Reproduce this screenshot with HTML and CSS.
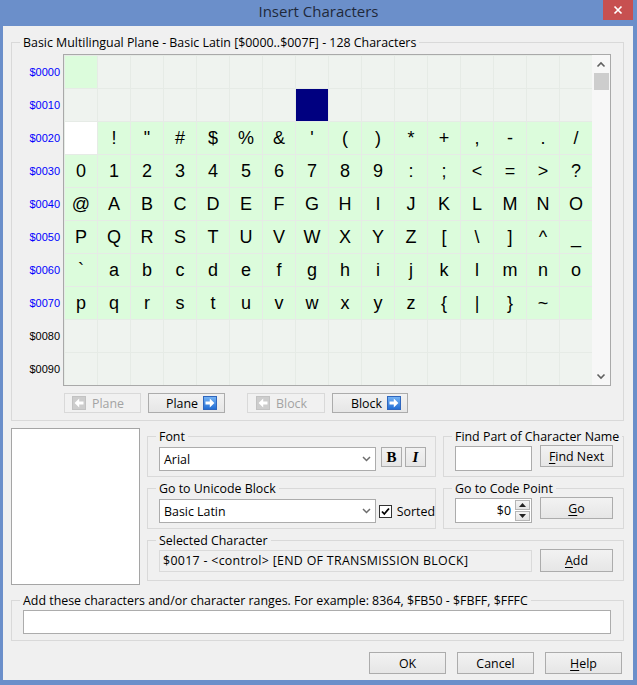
FILE: index.html
```html
<!DOCTYPE html>
<html>
<head>
<meta charset="utf-8">
<title>Insert Characters</title>
<link rel="stylesheet" href="styles.css">
</head>
<body>
<div class="window">
  <div class="titlebar">
    <div class="title">Insert Characters</div>
    <div class="close"><svg width="10" height="10" viewBox="0 0 10 10"><path d="M1.5 1.5L8.5 8.5M8.5 1.5L1.5 8.5" stroke="#fff" stroke-width="1.7"/></svg></div>
  </div>
  <div class="client">
    <fieldset class="group plane">
      <legend>Basic Multilingual Plane - Basic Latin [$0000..$007F] - 128 Characters</legend>
      <div class="plane-body">
        <div class="chart">
          <div class="rowlabels">
            <div class="rl">$0000</div>
            <div class="rl">$0010</div>
            <div class="rl">$0020</div>
            <div class="rl">$0030</div>
            <div class="rl">$0040</div>
            <div class="rl">$0050</div>
            <div class="rl">$0060</div>
            <div class="rl">$0070</div>
            <div class="rl k">$0080</div>
            <div class="rl k">$0090</div>
          </div>
          <div class="gridbox">
            <div class="cells">
              <span class="c g"></span><span class="c"></span><span class="c"></span><span class="c"></span><span class="c"></span><span class="c"></span><span class="c"></span><span class="c"></span><span class="c"></span><span class="c"></span><span class="c"></span><span class="c"></span><span class="c"></span><span class="c"></span><span class="c"></span><span class="c"></span>
              <span class="c"></span><span class="c"></span><span class="c"></span><span class="c"></span><span class="c"></span><span class="c"></span><span class="c"></span><span class="c sel"></span><span class="c"></span><span class="c"></span><span class="c"></span><span class="c"></span><span class="c"></span><span class="c"></span><span class="c"></span><span class="c"></span>
              <span class="c w"></span><span class="c g">!</span><span class="c g">&quot;</span><span class="c g">#</span><span class="c g">$</span><span class="c g">%</span><span class="c g">&amp;</span><span class="c g">'</span><span class="c g">(</span><span class="c g">)</span><span class="c g">*</span><span class="c g">+</span><span class="c g">,</span><span class="c g">-</span><span class="c g">.</span><span class="c g">/</span>
              <span class="c g">0</span><span class="c g">1</span><span class="c g">2</span><span class="c g">3</span><span class="c g">4</span><span class="c g">5</span><span class="c g">6</span><span class="c g">7</span><span class="c g">8</span><span class="c g">9</span><span class="c g">:</span><span class="c g">;</span><span class="c g">&lt;</span><span class="c g">=</span><span class="c g">&gt;</span><span class="c g">?</span>
              <span class="c g">@</span><span class="c g">A</span><span class="c g">B</span><span class="c g">C</span><span class="c g">D</span><span class="c g">E</span><span class="c g">F</span><span class="c g">G</span><span class="c g">H</span><span class="c g">I</span><span class="c g">J</span><span class="c g">K</span><span class="c g">L</span><span class="c g">M</span><span class="c g">N</span><span class="c g">O</span>
              <span class="c g">P</span><span class="c g">Q</span><span class="c g">R</span><span class="c g">S</span><span class="c g">T</span><span class="c g">U</span><span class="c g">V</span><span class="c g">W</span><span class="c g">X</span><span class="c g">Y</span><span class="c g">Z</span><span class="c g">[</span><span class="c g">\</span><span class="c g">]</span><span class="c g">^</span><span class="c g">_</span>
              <span class="c g">`</span><span class="c g">a</span><span class="c g">b</span><span class="c g">c</span><span class="c g">d</span><span class="c g">e</span><span class="c g">f</span><span class="c g">g</span><span class="c g">h</span><span class="c g">i</span><span class="c g">j</span><span class="c g">k</span><span class="c g">l</span><span class="c g">m</span><span class="c g">n</span><span class="c g">o</span>
              <span class="c g">p</span><span class="c g">q</span><span class="c g">r</span><span class="c g">s</span><span class="c g">t</span><span class="c g">u</span><span class="c g">v</span><span class="c g">w</span><span class="c g">x</span><span class="c g">y</span><span class="c g">z</span><span class="c g">{</span><span class="c g">|</span><span class="c g">}</span><span class="c g">~</span><span class="c g"></span>
              <span class="c"></span><span class="c"></span><span class="c"></span><span class="c"></span><span class="c"></span><span class="c"></span><span class="c"></span><span class="c"></span><span class="c"></span><span class="c"></span><span class="c"></span><span class="c"></span><span class="c"></span><span class="c"></span><span class="c"></span><span class="c"></span>
              <span class="c"></span><span class="c"></span><span class="c"></span><span class="c"></span><span class="c"></span><span class="c"></span><span class="c"></span><span class="c"></span><span class="c"></span><span class="c"></span><span class="c"></span><span class="c"></span><span class="c"></span><span class="c"></span><span class="c"></span><span class="c"></span>
            </div>
            <div class="scroll">
              <div class="sb-btn"><svg width="10" height="7" viewBox="0 0 10 7"><path d="M1.5 5.5L5 2L8.5 5.5" fill="none" stroke="#606060" stroke-width="1.6"/></svg></div>
              <div class="sb-thumb"></div>
              <div class="sb-track"></div>
              <div class="sb-btn"><svg width="10" height="7" viewBox="0 0 10 7"><path d="M1.5 1.5L5 5L8.5 1.5" fill="none" stroke="#606060" stroke-width="1.6"/></svg></div>
            </div>
          </div>
        </div>
        <div class="nav">
          <button class="btn navbtn off start"><svg class="ico" width="14" height="14" viewBox="0 0 14 14"><rect x="0.5" y="0.5" width="13" height="13" fill="#cdcdcd" stroke="#c2c2c2"/><path d="M11.5 5.6H7.2V2.6L2.6 7L7.2 11.4V8.4H11.5z" fill="#fff"/></svg><span>Plane</span></button>
          <button class="btn navbtn end gap7"><span>Plane</span><svg class="ico" width="14" height="14" viewBox="0 0 14 14"><defs><linearGradient id="gb1" x1="0" y1="0" x2="0" y2="1"><stop offset="0" stop-color="#79b6f6"/><stop offset="1" stop-color="#1f6bd3"/></linearGradient></defs><rect x="0.5" y="0.5" width="13" height="13" fill="url(#gb1)" stroke="#2f66bd"/><path d="M2.5 5.6H6.8V2.6L11.4 7L6.8 11.4V8.4H2.5z" fill="#fff"/></svg></button>
          <button class="btn navbtn off start gap22 wide"><svg class="ico" width="14" height="14" viewBox="0 0 14 14"><rect x="0.5" y="0.5" width="13" height="13" fill="#cdcdcd" stroke="#c2c2c2"/><path d="M11.5 5.6H7.2V2.6L2.6 7L7.2 11.4V8.4H11.5z" fill="#fff"/></svg><span>Block</span></button>
          <button class="btn navbtn end gap7 r6"><span>Block</span><svg class="ico" width="14" height="14" viewBox="0 0 14 14"><defs><linearGradient id="gb2" x1="0" y1="0" x2="0" y2="1"><stop offset="0" stop-color="#79b6f6"/><stop offset="1" stop-color="#1f6bd3"/></linearGradient></defs><rect x="0.5" y="0.5" width="13" height="13" fill="url(#gb2)" stroke="#2f66bd"/><path d="M2.5 5.6H6.8V2.6L11.4 7L6.8 11.4V8.4H2.5z" fill="#fff"/></svg></button>
        </div>
      </div>
    </fieldset>

    <div class="lower">
      <div class="preview"></div>

      <fieldset class="group">
        <legend>Font</legend>
        <div class="gbody">
          <div class="combo w217"><span>Arial</span><svg width="9" height="6" viewBox="0 0 9 6"><path d="M1 1L4.5 4.5L8 1" fill="none" stroke="#6d6d6d" stroke-width="1.5"/></svg></div>
          <button class="btn tbtn bold">B</button>
          <button class="btn tbtn ital">I</button>
        </div>
      </fieldset>

      <fieldset class="group">
        <legend>Find Part of Character Name</legend>
        <div class="gbody g3">
          <div class="edit e77"></div>
          <button class="btn sidebtn"><span><u>F</u>ind Next</span></button>
        </div>
      </fieldset>

      <fieldset class="group">
        <legend>Go to Unicode Block</legend>
        <div class="gbody">
          <div class="combo w217"><span>Basic Latin</span><svg width="9" height="6" viewBox="0 0 9 6"><path d="M1 1L4.5 4.5L8 1" fill="none" stroke="#6d6d6d" stroke-width="1.5"/></svg></div>
          <div class="check"><svg width="13" height="13" viewBox="0 0 13 13"><rect x="0.5" y="0.5" width="12" height="12" fill="#fff" stroke="#333"/><path d="M3 6.5L5.3 9L10 3.5" fill="none" stroke="#000" stroke-width="1.8"/></svg><span>Sorted</span></div>
        </div>
      </fieldset>

      <fieldset class="group">
        <legend>Go to Code Point</legend>
        <div class="gbody g3">
          <div class="edit e77 spinedit"><span class="spinval">$0</span>
            <div class="spin">
              <div class="spinb"><svg width="7" height="4" viewBox="0 0 7 4"><path d="M0 4L3.5 0L7 4z" fill="#222"/></svg></div>
              <div class="spinb"><svg width="7" height="4" viewBox="0 0 7 4"><path d="M0 0L3.5 4L7 0z" fill="#222"/></svg></div>
            </div>
          </div>
          <button class="btn sidebtn"><span><u>G</u>o</span></button>
        </div>
      </fieldset>

      <fieldset class="group selected">
        <legend>Selected Character</legend>
        <div class="gbody g3">
          <div class="rofield">$0017 - &lt;control&gt; [END OF TRANSMISSION BLOCK]</div>
          <button class="btn sidebtn addbtn"><span><u>A</u>dd</span></button>
        </div>
      </fieldset>
    </div>

    <fieldset class="group addgroup">
      <legend>Add these characters and/or character ranges. For example: 8364, $FB50 - $FBFF, $FFFC</legend>
      <div class="gbody g3 pb">
        <div class="edit wide-edit"></div>
      </div>
    </fieldset>

    <div class="dlgbtns">
      <button class="btn dlgbtn">OK</button>
      <button class="btn dlgbtn">Cancel</button>
      <button class="btn dlgbtn"><span><u>H</u>elp</span></button>
    </div>
  </div>
</div>
</body>
</html>
```

FILE: styles.css
```css
* { box-sizing: border-box; }
html, body { margin: 0; padding: 0; }
body {
  width: 637px;
  height: 685px;
  overflow: hidden;
  background: #6b8fca;
  font-family: "Open Sans", "Noto Sans", sans-serif;
  font-size: 12.4px;
  color: #000;
}
.window { display: flex; flex-direction: column; height: 685px; }

.titlebar {
  height: 26px;
  display: grid;
  grid-template-columns: 1fr auto 1fr;
  align-items: start;
}
.title {
  grid-column: 2;
  font-size: 15px;
  line-height: 22px;
  color: #1f293a;
}
.close {
  grid-column: 3;
  justify-self: end;
  width: 30px;
  height: 20px;
  margin-right: 4px;
  background: #c75050;
  display: flex;
  align-items: center;
  justify-content: center;
}

.client {
  flex: 1;
  margin: 0 4px 5px 3px;
  background: #f0f0f0;
  padding: 9px 0 0 8px;
}

.group {
  border: 1px solid #d9d9d9;
  margin: 0;
  padding: 0;
  min-width: 0;
}
.group > legend {
  padding: 2px 3px 0;
  margin-left: 8px;
  line-height: 12px;
  white-space: nowrap;
}

.plane { width: 613px; }
.plane-body { padding: 5px 0 7px 0; }
.chart { display: flex; }
.rowlabels { width: 51px; padding-top: 2px; }
.rl {
  height: 33px;
  line-height: 33px;
  text-align: right;
  padding-right: 3px;
  font-family: "Liberation Sans", Arial, sans-serif;
  font-size: 11px;
  color: #0000ff;
}
.rl.k { color: #000; }

.gridbox { display: flex; border: 1px solid #a9a9a9; }
.cells {
  display: grid;
  grid-template-columns: repeat(16, 33px);
  grid-auto-rows: 33px;
}
.c {
  border-left: 1px solid #e6ebe6;
  border-top: 1px solid #e6ebe6;
  background: #eff3ef;
  font-family: "Liberation Sans", Arial, sans-serif;
  font-size: 18px;
  line-height: 32px;
  text-align: center;
}
.c.g { background: #dcfcdc; }
.c.w { background: #fff; }
.c.sel { background: #000080; }

.scroll {
  width: 18px;
  background: #f7f7f7;
  display: flex;
  flex-direction: column;
  align-items: center;
}
.sb-btn { height: 18px; width: 100%; display: flex; align-items: center; justify-content: center; }
.sb-thumb { width: 15px; height: 17px; background: #cdcdcd; margin-left: 1px; }
.sb-track { flex: 1; }

button { font: inherit; margin: 0; padding: 0; color: #000; }
.btn {
  border: 1px solid #acacac;
  background: linear-gradient(#f2f2f2, #e6e6e6);
  display: flex;
  align-items: center;
  justify-content: center;
}
.btn u { text-underline-offset: 2px; }

.nav { display: flex; margin: 7px 0 0 52px; }
.navbtn { width: 77px; height: 20px; gap: 6px; }
.navbtn.off { color: #a3a3a3; border-color: #d9d9d9; background: #f1f1f1; }
.navbtn.start { justify-content: flex-start; padding-left: 7px; }
.navbtn.end { justify-content: flex-end; padding-right: 7px; gap: 5px; }
.navbtn.wide { width: 78px; padding-left: 8px; }
.navbtn.r6 { padding-right: 6px; width: 76px; }
.gap7 { margin-left: 7px; }
.gap22 { margin-left: 22px; }
.ico { flex: none; }

.lower {
  display: grid;
  grid-template-columns: 129px 289px 181px;
  grid-template-rows: 48px 48px 48px;
  column-gap: 7px;
  row-gap: 4px;
  margin-top: 8px;
}
.preview {
  grid-row: 1 / 4;
  background: #fff;
  border: 1px solid #a5a5a5;
  height: 157px;
  margin-top: -1px;
}
.selected { grid-column: 2 / 4; }

.gbody { display: flex; align-items: center; padding: 4px 0 0 11px; }
.gbody.g3 { align-items: flex-start; padding-top: 3px; }
.gbody.pb { padding-bottom: 6px; }

.combo {
  height: 24px;
  background: #fff;
  border: 1px solid #acacac;
  display: flex;
  align-items: center;
  justify-content: space-between;
  padding: 0 4px 0 4px;
}
.w217 { width: 217px; }
.tbtn {
  width: 21px;
  height: 20px;
  margin-left: 5px;
  align-self: flex-start;
  font-family: "Liberation Serif", "Times New Roman", serif;
  font-size: 15px;
  font-weight: bold;
}
.tbtn.ital { margin-left: 3px; font-style: italic; }

.check { display: flex; align-items: center; gap: 5px; margin-left: 3px; }
.check svg { flex: none; }

.edit { height: 25px; background: #fff; border: 1px solid #acacac; }
.e77 { width: 77px; }
.sidebtn { width: 73px; height: 22px; margin-left: 8px; margin-top: -1px; }
.addbtn { height: 23px; }

.spinedit { display: flex; align-items: stretch; justify-content: flex-end; padding: 1px 1px 1px 0; }
.spinval { align-self: center; padding-right: 4px; }
.spin { width: 15px; display: flex; flex-direction: column; gap: 1px; }
.spinb {
  flex: 1;
  border: 1px solid #b5b5b5;
  background: linear-gradient(#f4f4f4, #e4e4e4);
  display: flex;
  align-items: center;
  justify-content: center;
}

.rofield {
  width: 373px;
  height: 22px;
  background: #f0f0f0;
  border: 1px solid #dadada;
  line-height: 20px;
  padding-left: 3px;
  white-space: nowrap;
  letter-spacing: 0.3px;
}

.addgroup { width: 613px; margin-top: 12px; }
.wide-edit { width: 588px; height: 24px; }

.dlgbtns {
  display: flex;
  justify-content: flex-end;
  gap: 11px;
  margin-top: 11px;
  padding-right: 11px;
}
.dlgbtn { width: 77px; height: 22px; }
```
